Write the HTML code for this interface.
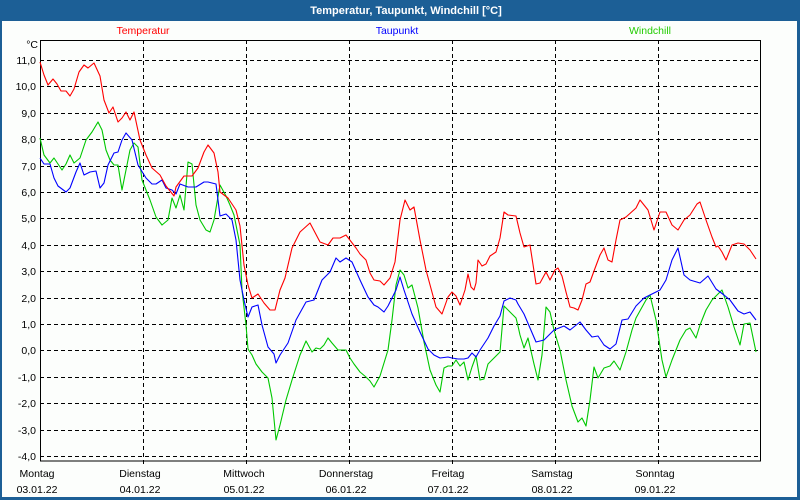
<!DOCTYPE html>
<html><head><meta charset="utf-8"><style>
html,body{margin:0;padding:0;width:800px;height:500px;overflow:hidden;background:#1c5f96;}
</style></head><body>
<svg width="800" height="500" xmlns="http://www.w3.org/2000/svg" font-family="Liberation Sans, sans-serif" font-size="10.5">
<rect x="0" y="0" width="800" height="500" fill="#1c5f96"/>
<rect x="2" y="21" width="795" height="476" fill="#fcfefc"/>
<text x="406" y="14" fill="#fff" font-weight="bold" font-size="11" text-anchor="middle">Temperatur, Taupunkt, Windchill [°C]</text>
<text x="143" y="34" fill="#ff0000" text-anchor="middle">Temperatur</text>
<text x="397" y="34" fill="#0000ff" text-anchor="middle">Taupunkt</text>
<text x="650" y="34" fill="#22cc00" text-anchor="middle">Windchill</text>
<g stroke="#000" stroke-dasharray="4,3" stroke-width="1">
<line x1="40" x2="760" y1="60.5" y2="60.5"/><line x1="40" x2="760" y1="86.5" y2="86.5"/><line x1="40" x2="760" y1="113.5" y2="113.5"/><line x1="40" x2="760" y1="139.5" y2="139.5"/><line x1="40" x2="760" y1="166.5" y2="166.5"/><line x1="40" x2="760" y1="192.5" y2="192.5"/><line x1="40" x2="760" y1="218.5" y2="218.5"/><line x1="40" x2="760" y1="245.5" y2="245.5"/><line x1="40" x2="760" y1="271.5" y2="271.5"/><line x1="40" x2="760" y1="298.5" y2="298.5"/><line x1="40" x2="760" y1="324.5" y2="324.5"/><line x1="40" x2="760" y1="350.5" y2="350.5"/><line x1="40" x2="760" y1="377.5" y2="377.5"/><line x1="40" x2="760" y1="403.5" y2="403.5"/><line x1="40" x2="760" y1="430.5" y2="430.5"/><line x1="40" x2="760" y1="456.5" y2="456.5"/>
<line x1="143.5" x2="143.5" y1="40" y2="465"/><line x1="246.5" x2="246.5" y1="40" y2="465"/><line x1="349.5" x2="349.5" y1="40" y2="465"/><line x1="452.5" x2="452.5" y1="40" y2="465"/><line x1="555.5" x2="555.5" y1="40" y2="465"/><line x1="658.5" x2="658.5" y1="40" y2="465"/>
</g>
<rect x="40.5" y="40.5" width="720" height="420.5" fill="none" stroke="#000" stroke-width="1"/>
<g text-anchor="end" fill="#000">
<text x="38" y="48">°C</text>
<text x="36" y="64">11,0</text><text x="36" y="90">10,0</text><text x="36" y="117">9,0</text><text x="36" y="143">8,0</text><text x="36" y="170">7,0</text><text x="36" y="196">6,0</text><text x="36" y="222">5,0</text><text x="36" y="249">4,0</text><text x="36" y="275">3,0</text><text x="36" y="302">2,0</text><text x="36" y="328">1,0</text><text x="36" y="354">0,0</text><text x="36" y="381">-1,0</text><text x="36" y="407">-2,0</text><text x="36" y="434">-3,0</text><text x="36" y="460">-4,0</text>
</g>
<g text-anchor="middle" fill="#000">
<text x="37" y="477">Montag</text><text x="37" y="493">03.01.22</text>
<text x="140" y="477">Dienstag</text><text x="140" y="493">04.01.22</text>
<text x="244" y="477">Mittwoch</text><text x="244" y="493">05.01.22</text>
<text x="346" y="477">Donnerstag</text><text x="346" y="493">06.01.22</text>
<text x="448" y="477">Freitag</text><text x="448" y="493">07.01.22</text>
<text x="552" y="477">Samstag</text><text x="552" y="493">08.01.22</text>
<text x="655" y="477">Sonntag</text><text x="655" y="493">09.01.22</text>
</g>
<g fill="none" stroke-width="1.1" stroke-linejoin="round">
<polyline stroke="#00c800" points="40,138 44,155 50,163 54,158 58,164 62,170 66,164 70,155 74,163 80,158 86,140 92,132 98,122 102,130 106,150 110,160 114,165 118,165 122,190 126,170 130,150 134,143 138,147 142,180 146,190 150,200 156,217 162,225 168,220 172,198 176,208 180,195 184,210 188,162 192,164 196,205 200,220 206,230 210,232 214,220 220,185 226,196 230,205 234,215 236,225 240,245 242,290 246,325 248,349 252,355 256,364 262,372 268,378 272,398 276,440 280,425 286,400 292,380 300,355 306,341 312,352 316,348 320,349 324,345 328,338 332,343 338,350 346,350 350,358 354,364 360,372 366,377 370,381 374,387 380,376 388,350 392,320 396,285 400,270 404,275 408,288 412,285 418,308 424,342 430,370 436,385 440,392 444,368 448,366 452,366 456,360 460,366 464,362 468,380 472,367 476,356 480,380 484,379 488,364 494,358 500,352 504,306 510,312 516,318 518,326 520,335 524,348 528,338 534,364 538,380 542,355 546,307 550,312 554,330 560,350 566,380 572,406 578,422 582,418 586,426 590,400 594,367 598,378 604,368 610,366 614,361 620,370 626,352 632,330 636,318 646,300 650,295 656,320 662,360 666,377 672,360 680,340 686,330 690,328 696,338 700,325 706,310 712,300 722,290 728,307 734,327 740,345 744,324 750,323 756,352"/>
<polyline stroke="#0000ff" points="40,158 44,164 50,164 54,178 58,186 66,192 70,188 76,172 80,163 84,175 90,172 96,171 100,188 104,183 108,165 114,153 118,152 122,140 126,133 132,140 138,165 146,178 152,184 156,184 162,180 166,188 172,190 176,194 180,184 188,187 196,187 204,182 208,182 216,184 220,216 226,214 232,220 236,240 240,280 244,300 248,317 252,307 258,305 262,325 268,347 274,354 276,363 280,355 288,343 296,320 306,302 314,300 322,280 330,272 336,258 340,262 346,258 352,262 360,280 368,297 374,305 378,307 384,312 388,306 396,290 400,277 404,290 412,314 420,332 428,349 434,355 440,358 448,357 452,358 458,359 464,359 468,358 472,353 476,357 480,350 488,338 494,326 500,316 504,301 510,298 516,300 518,304 524,314 530,328 536,342 544,340 554,330 564,326 570,330 580,322 586,330 592,337 598,336 604,345 610,349 616,344 622,320 628,319 636,306 644,298 652,294 660,290 666,280 672,260 678,248 684,275 690,280 700,283 708,276 716,289 724,295 730,300 738,311 744,314 750,312 756,320"/>
<polyline stroke="#ff0000" points="40,62 44,75 48,85 53,79 57,84 61,91 66,91 70,96 74,89 79,72 84,65 88,68 94,63 100,76 104,100 109,113 113,107 118,122 122,118 126,112 130,120 134,112 140,140 146,155 152,168 160,175 166,186 174,196 176,187 184,176 192,176 198,168 204,152 208,145 214,153 218,172 220,192 228,198 236,210 240,226 244,265 248,285 252,298 258,294 264,303 270,310 275,310 280,290 285,278 292,248 300,232 310,223 320,242 328,245 333,238 340,238 346,235 356,248 360,254 366,260 370,273 374,280 380,281 384,285 390,278 395,262 400,220 405,200 410,210 414,207 420,240 426,270 436,307 442,314 448,297 452,292 456,296 460,305 465,290 468,274 471,287 474,290 476,283 478,260 482,266 486,264 490,256 496,252 500,238 504,212 508,215 516,216 520,233 524,247 530,245 536,284 540,283 546,272 550,280 555,270 558,268 562,276 566,292 570,307 574,308 578,310 582,300 586,284 590,282 594,271 600,255 604,248 608,260 612,262 616,240 620,220 626,217 636,208 640,200 648,210 654,230 660,212 666,212 672,225 678,230 684,220 690,215 697,204 700,202 706,220 712,237 716,247 718,246 722,252 726,260 732,245 738,243 744,244 750,250 756,259"/>
</g>
</svg>
</body></html>
